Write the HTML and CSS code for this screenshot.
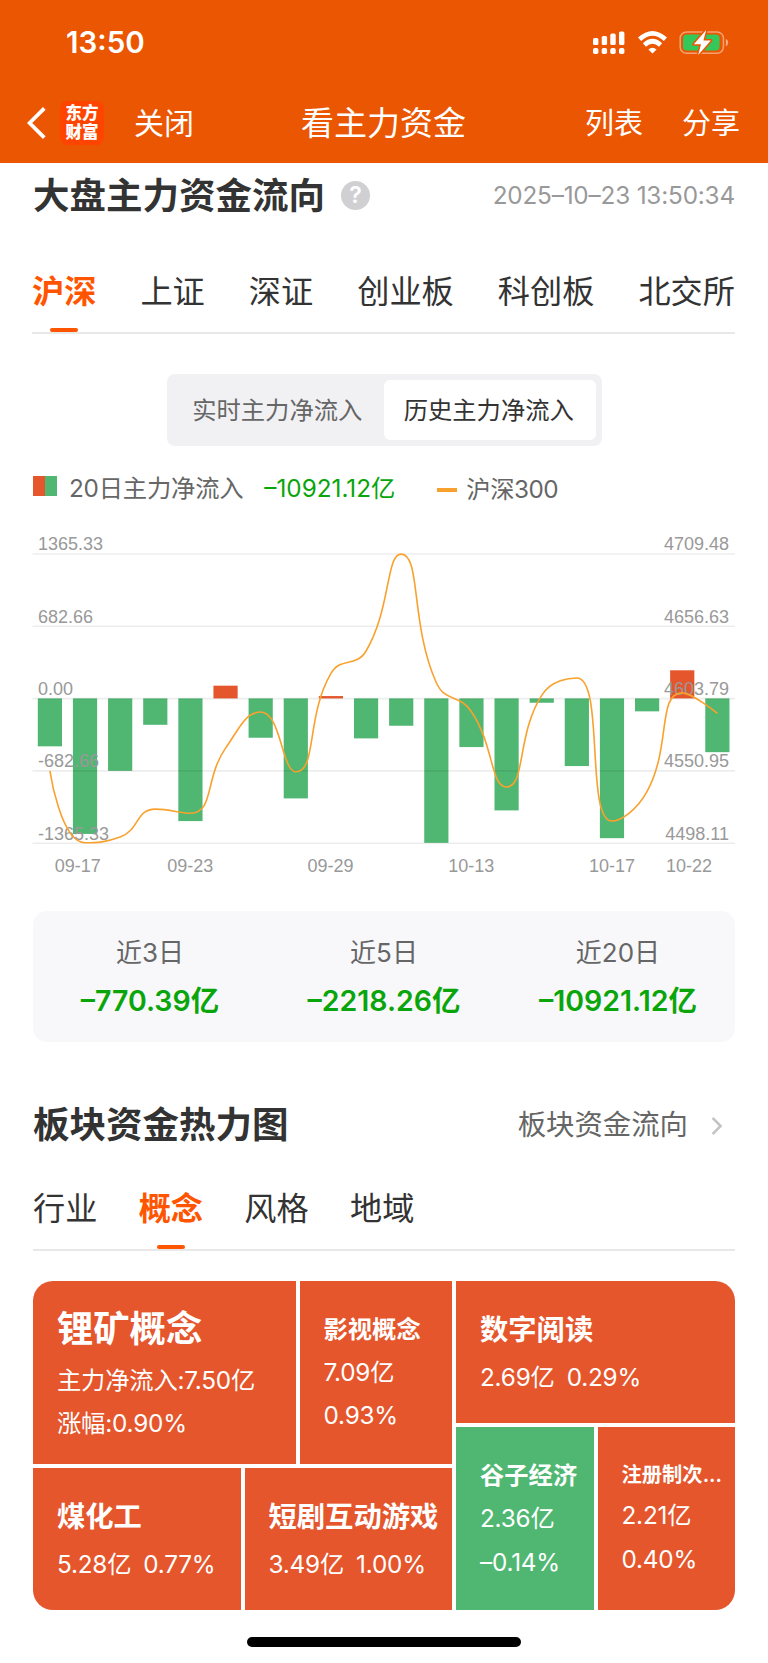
FILE: index.html
```html
<!DOCTYPE html>
<html lang="zh-CN">
<head>
    <meta charset="UTF-8">
    <meta name="viewport" content="width=device-width, initial-scale=1.0">
    <title>看主力资金</title>
    <link rel="stylesheet" href="styles.css">
</head>
<body>
    <header class="header">
        <div class="status-bar">
            <span class="time">13:50</span>
            <svg class="status-icons" width="138" height="28" viewBox="0 0 138 28">
                <g fill="#fff">
                    <rect x="1" y="10" width="5.4" height="7" rx="1.6"/>
                    <rect x="9.7" y="8" width="5.4" height="9" rx="1.6"/>
                    <rect x="18.3" y="5.6" width="5.4" height="11.4" rx="1.6"/>
                    <rect x="27" y="3.4" width="5.4" height="13.6" rx="1.6"/>
                    <rect x="1" y="20" width="5.4" height="6" rx="1.8"/>
                    <rect x="9.7" y="20" width="5.4" height="6" rx="1.8"/>
                    <rect x="18.3" y="20" width="5.4" height="6" rx="1.8"/>
                    <rect x="27" y="20" width="5.4" height="6" rx="1.8"/>
                    <path d="M60.5 25.6 L56.4 21.4 Q60.5 18 64.6 21.4 Z"/>
                </g>
                <g fill="none" stroke="#fff" stroke-width="4.6">
                    <path d="M47.6 11.3 Q60.5 -.6 73.4 11.3"/>
                    <path d="M52.4 17 Q60.5 9.5 68.6 17"/>
                </g>
                <rect x="88.2" y="3.9" width="43.2" height="21.4" rx="6.4" fill="none" stroke="#fff" stroke-opacity=".45" stroke-width="1.5"/>
                <path d="M133.8 10.8 Q136.2 12 136.2 14.6 Q136.2 17.2 133.8 18.4 Z" fill="#fff" fill-opacity=".5"/>
                <rect x="91" y="6.6" width="36.6" height="16" rx="4" fill="#34c759"/>
                <path d="M114.2 2 L101.8 16.3 H109 L106.2 27 L118.8 12.4 H111.4 Z" fill="#fff" stroke="#eb5602" stroke-width="3" paint-order="stroke" stroke-linejoin="round"/>
            </svg>
        </div>
        <nav class="nav">
            <div class="nav-side">
                <svg class="back" width="20" height="34" viewBox="0 0 20 34"><path d="M17.3 2.4 L2.6 17 L17.3 31.6" fill="none" stroke="#fff" stroke-width="3.8"/></svg>
                <div class="logo"><span>东方</span><span>财富</span></div>
                <span class="close">关闭</span>
            </div>
            <h1>看主力资金</h1>
            <div class="nav-side nav-right">
                <span>列表</span>
                <span>分享</span>
            </div>
        </nav>
    </header>

    <main class="content">
        <section class="flow">
            <div class="section-head">
                <h2>大盘主力资金流向</h2>
                <span class="help">?</span>
                <span class="date">2025–10–23 13:50:34</span>
            </div>

            <div class="tabs tabs-market">
                <span class="tab active">沪深</span>
                <span class="tab">上证</span>
                <span class="tab">深证</span>
                <span class="tab">创业板</span>
                <span class="tab">科创板</span>
                <span class="tab">北交所</span>
            </div>

            <div class="segment">
                <span>实时主力净流入</span>
                <span class="on">历史主力净流入</span>
            </div>

            <div class="legend">
                <i class="swatch"></i>
                <span class="legend-name">20日主力净流入</span>
                <span class="legend-value">–10921.12亿</span>
                <i class="dash"></i>
                <span class="legend-index">沪深300</span>
            </div>

            <svg id="chart" class="chart" width="768" height="360" viewBox="0 520 768 360"></svg>

            <div class="stats">
                <div class="stat"><span>近3日</span><b>–770.39亿</b></div>
                <div class="stat"><span>近5日</span><b>–2218.26亿</b></div>
                <div class="stat"><span>近20日</span><b>–10921.12亿</b></div>
            </div>
        </section>

        <section class="heat">
            <div class="section-head">
                <h2>板块资金热力图</h2>
                <span class="more">板块资金流向</span>
                <svg class="chevron" width="12" height="20" viewBox="0 0 12 20"><path d="M1.6 1.8 L9.6 10 L1.6 18.2" fill="none" stroke="#c4c4c4" stroke-width="2.6"/></svg>
            </div>

            <div class="tabs tabs-board">
                <span class="tab">行业</span>
                <span class="tab active">概念</span>
                <span class="tab">风格</span>
                <span class="tab">地域</span>
            </div>

            <div class="treemap">
                <div class="col col-left">
                    <div class="line line-tall">
                        <div class="tile tile-first"><h3 class="xl">锂矿概念</h3><p>主力净流入:7.50亿</p><p>涨幅:0.90%</p></div>
                        <div class="tile"><h3 class="md">影视概念</h3><p>7.09亿</p><p>0.93%</p></div>
                    </div>
                    <div class="line">
                        <div class="tile"><h3 class="lg">煤化工</h3><p><span>5.28亿</span><span>0.77%</span></p></div>
                        <div class="tile"><h3 class="lg">短剧互动游戏</h3><p><span>3.49亿</span><span>1.00%</span></p></div>
                    </div>
                </div>
                <div class="col">
                    <div class="line">
                        <div class="tile"><h3 class="lg">数字阅读</h3><p><span>2.69亿</span><span>0.29%</span></p></div>
                    </div>
                    <div class="line line-tall">
                        <div class="tile down"><h3 class="md">谷子经济</h3><p>2.36亿</p><p>–0.14%</p></div>
                        <div class="tile"><h3 class="sm">注册制次...</h3><p>2.21亿</p><p>0.40%</p></div>
                    </div>
                </div>
            </div>
        </section>
    </main>
    <div class="home-bar"></div>

    <script>
        const chart = document.getElementById('chart');
        const yTop = 554, yBottom = 843.2, yZero = 698.4;
        const max = 1365.33;

        // Daily net inflow, in 亿
        const inflow = [-452, -1278, -683, -249, -1157, 120, -371, -943, 22, -377,
            -258, -1362, -459, -1056, -41, -638, -1318, -122, 265, -507];
        // 沪深300 close
        const closes = [4551, 4498.4, 4502.6, 4523, 4520, 4567.6, 4594, 4550.3, 4622.2, 4638.6,
            4709.4, 4615.4, 4594.2, 4539.2, 4606.2, 4618.8, 4514.3, 4536, 4608, 4593];

        const px = i => 49.9 + i * 35.13;
        const closeY = v => yBottom - (v - 4498.11) / (4709.48 - 4498.11) * (yBottom - yTop);

        let out = '';
        inflow.forEach((v, i) => {
            const h = Math.abs(v) / max * (yBottom - yZero);
            out += `<rect class="${v > 0 ? 'bar-up' : 'bar-down'}" x="${px(i) - 12.1}" y="${v > 0 ? yZero - h : yZero}" width="24.2" height="${h}"/>`;
        });

        const left = ['1365.33', '682.66', '0.00', '-682.66', '-1365.33'];
        const right = ['4709.48', '4656.63', '4603.79', '4550.95', '4498.11'];
        left.forEach((label, i) => {
            const y = yTop + i * (yBottom - yTop) / 4;
            out += `<line class="grid" x1="32.5" x2="735" y1="${y}" y2="${y}"/>`;
            out += `<text x="38" y="${y - 3.6}">${label}</text>`;
            out += `<text x="729" y="${y - 3.6}" text-anchor="end">${right[i]}</text>`;
        });

        [['09-17', 77.7], ['09-23', 190.2], ['09-29', 330.6], ['10-13', 471.3], ['10-17', 612], ['10-22', 689]].forEach(d => {
            out += `<text x="${d[1]}" y="872.3" text-anchor="middle">${d[0]}</text>`;
        });

        // Smooth curve, control points clamped between neighbours
        const clamp = (v, a, b) => Math.max(Math.min(v, Math.max(a, b)), Math.min(a, b));
        const pts = closes.map((v, i) => [px(i), closeY(v)]);
        let path = `M${pts[0]}`;
        let cp0 = pts[0];
        for (let i = 1; i < pts.length; i++) {
            const p = pts[i], prev = pts[i - 1], next = pts[i + 1];
            let cp1 = p, nextCp = p;
            if (next) {
                const lenPrev = Math.hypot(p[0] - prev[0], p[1] - prev[1]);
                const lenNext = Math.hypot(next[0] - p[0], next[1] - p[1]);
                const ratio = lenNext / (lenNext + lenPrev);
                nextCp = p.map((c, k) => clamp(c + (next[k] - prev[k]) * 0.5 * ratio, next[k], c));
                cp1 = p.map((c, k) => clamp(c - (nextCp[k] - c) * lenPrev / lenNext, prev[k], c));
                nextCp = p.map((c, k) => c + (c - cp1[k]) * lenNext / lenPrev);
            }
            path += `C${cp0} ${cp1} ${p}`;
            cp0 = nextCp;
        }
        out += `<path class="index-line" d="${path}"/>`;
        chart.innerHTML = out;
    </script>
</body>
</html>
```
FILE: styles.css
```css
* {
    box-sizing: border-box;
}

body {
    margin: 0;
    height: 1663px;
    background-color: #fff;
    color: #333;
    font-family: Inter, "Noto Sans CJK SC", sans-serif;
    font-size: 24.3px;
    white-space: nowrap;
    overflow: hidden;
}

h1, h2, h3, p {
    margin: 0;
}

/* Header */
.header {
    height: 163px;
    background-color: #eb5602;
    color: #fff;
}

.status-bar {
    display: flex;
    justify-content: space-between;
    align-items: center;
    height: 84px;
    padding: 0 38px 0 66px;
}

.time {
    font-size: 29.5px;
    font-weight: 600;
}

.nav {
    display: flex;
    align-items: center;
    height: 77px;
    padding: 0 28px 0 27px;
}

.nav h1 {
    padding-bottom: 3px;
    font-size: 33px;
    font-weight: 400;
}

.nav-side {
    flex: 1;
    display: flex;
    align-items: center;
    font-size: 29px;
}

.nav-right {
    justify-content: flex-end;
    gap: 39px;
    padding-bottom: 4px;
}

.logo {
    display: flex;
    flex-direction: column;
    justify-content: center;
    width: 44px;
    height: 44px;
    margin-left: 13px;
    border-radius: 8px;
    background-color: #ff4400;
    text-align: center;
    font-size: 16.5px;
    font-weight: 900;
    line-height: 18.5px;
}

.close {
    margin-left: 30px;
    padding-bottom: 4px;
    font-size: 30px;
}

/* Sections */
.content {
    padding: 0 33px;
}

.section-head {
    display: flex;
    align-items: center;
    height: 64px;
}

.section-head h2 {
    padding-bottom: 3px;
    font-size: 36.5px;
    font-weight: 600;
}

.help {
    width: 29px;
    height: 29px;
    margin-left: 16px;
    border-radius: 50%;
    background-color: #d0d0d3;
    color: #fff;
    font-size: 23px;
    font-weight: 600;
    line-height: 29px;
    text-align: center;
}

.date {
    margin-left: auto;
    color: #999;
    letter-spacing: -0.17px;
}

.tabs {
    display: flex;
    border-bottom: 2px solid #e8e8e8;
    font-size: 32.2px;
}

.tab {
    position: relative;
    line-height: 49px;
}

.tab.active {
    color: #ff5500;
    font-weight: 600;
}

.tab.active::after {
    content: "";
    position: absolute;
    left: 50%;
    bottom: 0;
    width: 28px;
    height: 4px;
    margin-left: -14px;
    border-radius: 2px;
    background-color: #ff5500;
}

.tabs-market {
    justify-content: space-between;
    height: 67px;
    margin: 40px 0 0 -1px;
}

.tabs-market .tab {
    height: 65px;
}

.segment {
    display: flex;
    width: 435px;
    height: 72px;
    margin: 40px auto 0;
    padding: 6px;
    border-radius: 8px;
    background-color: #f1f1f4;
    color: #666;
}

.segment span {
    flex: 1;
    padding-right: 2px;
    line-height: 60px;
    text-align: center;
}

.segment .on {
    border-radius: 6px;
    background-color: #fff;
    color: #333;
}

.legend {
    display: flex;
    align-items: center;
    height: 40px;
    margin-top: 20px;
    color: #666;
}

.swatch {
    width: 24px;
    height: 20px;
    margin-right: 12px;
    background: linear-gradient(90deg, #e5562d 50%, #50b772 50%);
}

.legend-name {
    letter-spacing: -0.2px;
}

.legend-value {
    margin-left: 21px;
    color: #0aa50a;
}

.dash {
    width: 20px;
    height: 4px;
    margin: 8px 9px 0 42px;
    background-color: #f9a12e;
}

.legend-index {
    padding-top: 3px;
    letter-spacing: -0.5px;
}

/* Chart */
.chart {
    display: block;
    margin: 14px -33px 0;
}

.chart text {
    fill: #999;
    font-family: "Liberation Sans", Arial, sans-serif;
    font-size: 18px;
}

.grid {
    stroke: #000;
    stroke-opacity: 0.07;
    stroke-width: 1.6;
}

.bar-up {
    fill: #e5562d;
}

.bar-down {
    fill: #50b772;
}

.index-line {
    fill: none;
    stroke: #f9a12e;
    stroke-width: 1.6;
}

/* Totals */
.stats {
    display: flex;
    height: 131px;
    margin-top: 31px;
    padding-top: 18px;
    border-radius: 14px;
    background-color: #f8f8fb;
}

.stat {
    flex: 1;
    display: flex;
    flex-direction: column;
    align-items: center;
    color: #666;
    font-size: 26px;
    line-height: 48px;
}

.stat b {
    color: #0aa50a;
    font-size: 28.5px;
    font-weight: 600;
}

/* Heat map */
.heat {
    margin-top: 50px;
}

.more {
    margin-left: auto;
    padding-bottom: 4px;
    color: #666;
    font-size: 28.4px;
}

.chevron {
    margin: 3px 12px 0 23px;
}

.tabs-board {
    gap: 41.3px;
    height: 67px;
    margin-top: 28px;
}

.tabs-board .tab {
    height: 65px;
}

.treemap {
    display: flex;
    gap: 4px;
    height: 329px;
    margin-top: 30px;
    border-radius: 20px;
    overflow: hidden;
}

.col {
    display: flex;
    flex-direction: column;
    gap: 4px;
    width: 279px;
}

.col-left {
    width: 419px;
}

.line {
    display: flex;
    flex: 1;
    gap: 4px;
}

.line-tall {
    flex: none;
    height: 182.6px;
}

.tile {
    flex: 1;
    min-width: 0;
    display: flex;
    flex-direction: column;
    justify-content: center;
    padding-left: 24px;
    background-color: #e5562d;
    color: #fff;
    line-height: 43.5px;
}

.tile-first {
    flex: none;
    width: 262.5px;
}

.tile.down {
    background-color: #50b772;
}

.tile h3 {
    font-weight: 600;
}

.tile p {
    letter-spacing: -0.2px;
}

.tile p span + span {
    margin-left: 12px;
}

.xl {
    font-size: 36.3px;
    line-height: 60px;
}

.lg {
    font-size: 28.3px;
    line-height: 51px;
}

.md {
    font-size: 24.3px;
    line-height: 44px;
}

.sm {
    font-size: 20.3px;
    line-height: 38px;
}

.home-bar {
    width: 274px;
    height: 10px;
    margin: 27px auto 0;
    border-radius: 5px;
    background-color: #000;
}
```
